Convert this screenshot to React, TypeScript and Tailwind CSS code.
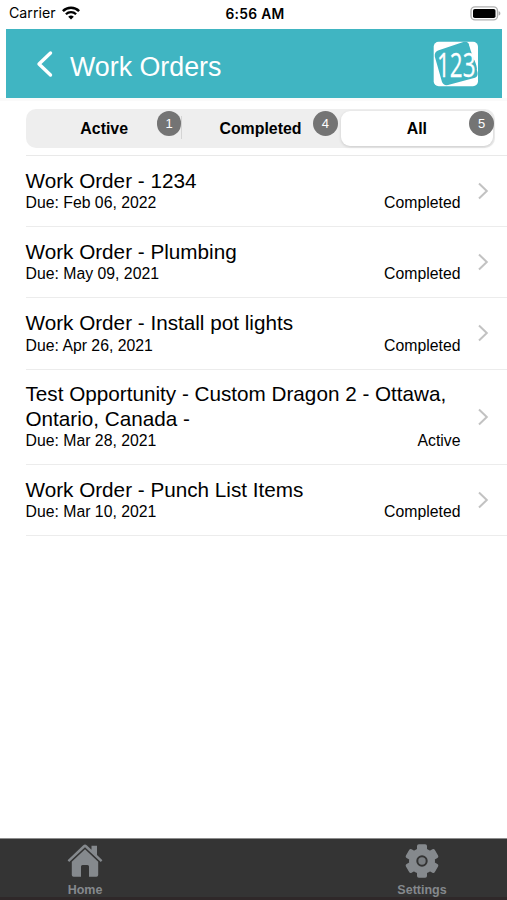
import { clsx } from 'clsx';

const tabs = [
  { label: 'Active', count: 1 },
  { label: 'Completed', count: 4 },
  { label: 'All', count: 5 },
];

const workOrders = [
  { title: 'Work Order - 1234', due: 'Feb 06, 2022', status: 'Completed' },
  { title: 'Work Order - Plumbing', due: 'May 09, 2021', status: 'Completed' },
  {
    title: 'Work Order - Install pot lights',
    due: 'Apr 26, 2021',
    status: 'Completed',
  },
  {
    title: 'Test Opportunity - Custom Dragon 2 - Ottawa, Ontario, Canada -',
    due: 'Mar 28, 2021',
    status: 'Active',
  },
  {
    title: 'Work Order - Punch List Items',
    due: 'Mar 10, 2021',
    status: 'Completed',
  },
];

const WifiIcon = () => (
  <svg width="18" height="14" viewBox="0 0 18 14" fill="none" stroke="#000">
    <path d="M0.9 5.1a11.5 11.5 0 0 1 16.2 0" strokeWidth="2.5" />
    <path d="M3.9 8.3a7.2 7.2 0 0 1 10.2 0" strokeWidth="2.3" />
    <path d="M9 13.6 6.2 10.8a4 4 0 0 1 5.6 0z" fill="#000" stroke="none" />
  </svg>
);

const BatteryIcon = () => (
  <svg width="31" height="15" viewBox="0 0 31 15">
    <rect x="1" y="0.9" width="26.5" height="13" rx="4" fill="#fff" stroke="#b0b0b0" strokeWidth="1.4" />
    <rect x="3" y="3" width="22.5" height="9" rx="1.8" fill="#000" />
    <path d="M28.6 5.3c2.4.5 2.4 3.7 0 4.2z" fill="#aaa" />
  </svg>
);

const Logo = () => (
  <svg width="46" height="46" viewBox="0 0 46 46" className="overflow-visible">
    <rect x="0.7" y="0.7" width="44.3" height="44.6" rx="5" fill="#fff" />
    <path
      d="M5 9.500 31 .8Q35 0 36 3.500L37.500 9 41.500 20 44.500 31.500Q45.200 35.500 42 36.800L15 44Q10.500 44.800 9 41L1.800 15.500Q1.200 11 5 9.500Z"
      fill="#40b5c2"
    />
    <path d="M36.200 4Q40.500 11 41.500 18.500 43.500 21 45 29V8Q42 4 36.200 4z" fill="#fff" />
    <path d="M38.500 16.500Q41 20 40 24.500L44 29Q43.500 20 38.500 16.500z" fill="#40b5c2" />
    <text
      x="4"
      y="35.500"
      textLength="38.500"
      lengthAdjust="spacingAndGlyphs"
      className="fill-white font-['Open_Sans',sans-serif] text-[32px]"
      stroke="#fff"
      strokeWidth="0.300"
    >
      123
    </text>
  </svg>
);

const HomeIcon = () => (
  <svg width="36" height="34" viewBox="0 0 36 34" fill="#85898d">
    <path d="M0.600 16.300 16 1.500Q18 -0.300 20 1.500L24.500 5.800V1.800H30V11L35.400 16.300 33.800 18 18 3.300 2.200 18z" />
    <path d="M18 5.300 31.200 17.700V31Q31.200 32.800 29.400 32.800H22V22.500Q22 21 20.500 21H15.500Q14 21 14 22.500V32.800H6.600Q4.800 32.800 4.800 31V17.700z" />
  </svg>
);

const SettingsIcon = () => (
  <svg width="34" height="34" viewBox="0 0 34 34">
    <g fill="#85898d">
      <circle cx="17" cy="17" r="13" />
      <rect x="12" y="0.300" width="10" height="33.400" rx="1.800" />
      <rect x="12" y="0.300" width="10" height="33.400" rx="1.800" transform="rotate(60 17 17)" />
      <rect x="12" y="0.300" width="10" height="33.400" rx="1.800" transform="rotate(120 17 17)" />
    </g>
    <circle cx="17" cy="17" r="4.700" fill="#797d81" stroke="#343434" strokeWidth="2" />
  </svg>
);

const StatusBar = () => (
  <div className="grid h-[29px] grid-cols-3 items-start pr-[6px] pl-[9px] text-black">
    <div className="flex items-center gap-[6px] pt-[3px] font-['Inter',sans-serif] text-[14.200px] leading-5">
      Carrier
      <WifiIcon />
    </div>
    <span className="pt-1 text-center font-['Inter',sans-serif] text-[13.800px] leading-5 font-semibold tracking-[0.300px]">
      6:56 AM
    </span>
    <div className="flex justify-end pt-[6px]">
      <BatteryIcon />
    </div>
  </div>
);

const Header = () => (
  <header className="mr-[5px] ml-[6px] flex h-[69px] items-center bg-[#40b5c2] pr-[23px] pl-[30px]">
    <svg width="18" height="28" viewBox="0 0 18 28" fill="none">
      <path d="M14.500 3 3 14 14.500 25" stroke="#fff" strokeWidth="3.400" strokeLinecap="round" strokeLinejoin="round" />
    </svg>
    <h1 className="mt-[6px] ml-4 text-[26.800px] leading-8 text-white">
      Work Orders
    </h1>
    <div className="ml-auto">
      <Logo />
    </div>
  </header>
);

const FilterTabs = ({ selected }: { selected: string }) => (
  <div className="mr-[12px] ml-[26px] grid h-[39px] grid-cols-3 rounded-[10px] bg-[#eee]">
    {tabs.map((tab) => (
      <button
        key={tab.label}
        className={clsx(
          'relative m-[2px] flex items-center justify-center rounded-[9px] pt-px text-[15.900px] font-bold text-black',
          tab.label === selected && 'bg-white shadow-[0_1px_3px_rgba(0,0,0,0.15)]',
        )}
      >
        {tab.label}
        {tab.label === 'Active' && (
          <span className="absolute top-[5px] -right-[2px] h-[23px] w-px bg-[#d4d4d4]" />
        )}
        <span className="absolute top-0 -right-px flex size-[24.500px] items-center justify-center rounded-full bg-[#747474] text-[13px] font-normal text-white">
          {tab.count}
        </span>
      </button>
    ))}
  </div>
);

const TabBar = () => (
  <nav className="flex h-[62px] justify-between border-t border-[#8c8c8c] bg-[#343434] px-[35px] text-[12.500px] font-bold text-[#85898d] shadow-[inset_0_-3px_0_#2f2829]">
    <button className="flex w-[100px] flex-col items-center pt-[5px]">
      <HomeIcon />
      <span className="mt-[4px] leading-4">Home</span>
    </button>
    <button className="flex w-[100px] flex-col items-center pt-[5px]">
      <SettingsIcon />
      <span className="mt-[4px] leading-4">Settings</span>
    </button>
  </nav>
);

const App = () => {
  return (
    <div className="flex h-[900px] w-[507px] flex-col overflow-hidden bg-white font-['Liberation_Sans',Arial,sans-serif]">
      <StatusBar />
      <Header />
      <div className="mb-[8px] h-[3px] bg-[#fafafa]" />
      <FilterTabs selected="All" />
      <ul className="mt-[7px] ml-[25.500px] border-t border-[#e9e9e9]">
        {workOrders.map((order) => (
          <li
            key={order.title}
            className="flex items-center border-b border-[#ececec] pt-[12.900px] pr-[18.500px] pb-[13px] text-black"
          >
            <div className="w-[435px]">
              <h2 className="text-[20.700px] leading-[24.300px]">{order.title}</h2>
              <div className="flex justify-between text-[15.800px] leading-5">
                <span>Due: {order.due}</span>
                <span>{order.status}</span>
              </div>
            </div>
            <svg width="12" height="18" viewBox="0 0 12 18" fill="none" className="ml-auto">
              <path d="M2 1.500 9.800 9 2 16.500" stroke="#c2c2c2" strokeWidth="2" />
            </svg>
          </li>
        ))}
      </ul>
      <div className="flex-1" />
      <TabBar />
    </div>
  );
};

export default App;
